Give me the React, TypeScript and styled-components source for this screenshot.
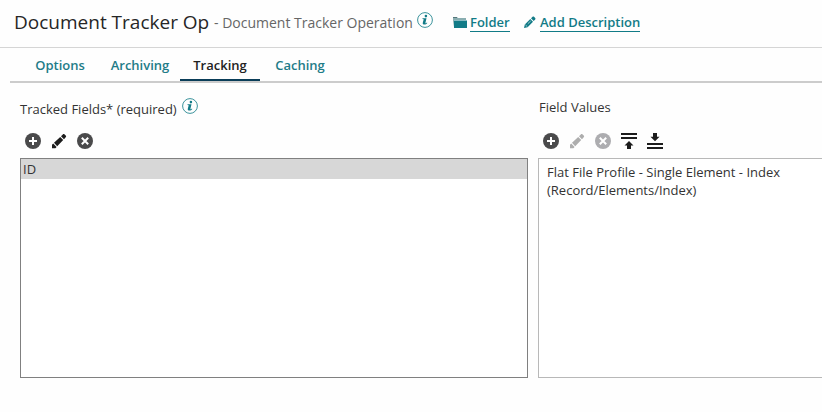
import React from "react";
import styled, { createGlobalStyle } from "styled-components";

const Global = createGlobalStyle`
  * { box-sizing: border-box; }
  body { margin: 0; background: #fff; overflow: hidden; }
`;

const Page = styled.div`
  height: 412px;
  overflow: hidden;
  background: #fefefe;
  color: #333;
  font: 13px/18px "Open Sans", "Noto Sans", sans-serif;
  white-space: nowrap;
`;

const Header = styled.header`
  display: flex;
  height: 48px;
  padding-left: 14px;
  border-bottom: 1px solid #d5d5d5;
`;

const Title = styled.h1`
  margin: 8px 0 0;
  width: 200px;
  font-size: 19px;
  line-height: 28px;
  font-weight: 400;
  color: #262626;
`;

const Subtitle = styled.span`
  margin-top: 13px;
  width: 203px;
  font-size: 14px;
  line-height: 20px;
  color: #666;
`;

const HeaderInfo = styled.span`
  display: flex;
  margin-top: 12px;
  width: 36px;
`;

const HeaderLink = styled.div<{ $width: number }>`
  display: flex;
  width: ${(p) => p.$width}px;
  svg { margin-top: 16px; flex: none; }
`;

const LinkText = styled.a<{ $gap: number }>`
  height: 19px;
  margin: 13px 0 0 ${(p) => p.$gap}px;
  border-bottom: 1px solid #127b87;
  font-size: 13px;
  line-height: 18px;
  font-weight: 600;
  color: #127b87;
`;

const Tabs = styled.nav`
  display: flex;
  height: 35px;
  margin-left: 10px;
  border-bottom: 2px solid #ccc;
`;

const Tab = styled.a<{ $active?: boolean; $width: number }>`
  width: ${(p) => p.$width}px;
  height: 33px;
  padding-top: 8px;
  text-align: center;
  font-weight: 600;
  color: ${(p) => (p.$active ? "#222" : "#1f7c88")};
  border-bottom: 2px solid ${(p) => (p.$active ? "#0a3d58" : "transparent")};

  &:nth-child(2) { margin-right: 10px; }
`;

const Columns = styled.main`
  display: grid;
  grid-template-columns: 508px 300px;
  gap: 10px;
  padding: 13px 0 0 20px;
`;

const Label = styled.div<{ $top: number; $indent?: number }>`
  display: flex;
  height: 37px;
  gap: 5px;
  padding: ${(p) => p.$top}px 0 0 ${(p) => p.$indent ?? 0}px;
  svg { margin-top: -2px; }
`;

const Toolbar = styled.div`
  display: flex;
  gap: 10px;
  height: 25px;
  padding-left: 5px;
`;

const List = styled.div<{ $border: string }>`
  height: 220px;
  border: 1px solid ${(p) => p.$border};
  background: #fff;
`;

const SelectedItem = styled.div`
  height: 20px;
  padding: 1px 2px;
  background: #d7d7d7;
`;

const ValueItem = styled.div`
  padding: 4px 8px;
`;

const InfoIcon = () => (
  <svg width="16" height="16" viewBox="0 0 16 16" fill="none">
    <circle cx="8" cy="8" r="7.4" stroke="#3b939c" />
    <circle cx="8.9" cy="4.1" r="1.3" fill="#127b87" />
    <path d="M5.5 6.3h4L8.3 11.3c.6 0 1.1-.4 1.6-.9l.4.5c-.8 1-1.7 1.6-2.9 1.6-1.4 0-1.9-.7-1.6-1.8l.9-3.4-1.2-.2z" fill="#127b87" />
  </svg>
);

const FolderIcon = () => (
  <svg width="14" height="12" viewBox="0 0 14 12">
    <path d="M0 1h4l1 1h8v2H1v7L0 5z" fill="#8aaeb1" />
    <path d="M1 4.5h13V12H1z" fill="#127b87" />
    <path d="M0 1h4v1H0z" fill="#55777b" />
  </svg>
);

const HeaderPencilIcon = () => (
  <svg width="12" height="12" viewBox="0 0 12 12" fill="#127b87">
    <path d="M0 12l.8-3.6L6.3 3 9 5.7l-5.4 5.5zM7 2.3L8.6.8c.4-.4 1-.4 1.4 0L11.2 2c.4.4.4 1 0 1.4L9.7 5z" />
    <path d="M1.4 8.8l1.9 1.9M3.8 7.8L6.7 5" stroke="#fff" strokeWidth=".6" />
  </svg>
);

const PencilIcon = ({ color }: { color: string }) => (
  <svg width="16" height="16" viewBox="0 0 16 16" fill={color}>
    <path d="M1 15.2v-3.4L2.2 10.5l3.4 3.4-1.2 1.3zM3 9.8L9.2 4l3 3-6 6.2zM10 3.2l1.8-1.8c.6-.6 1.2-.6 1.8 0l1.1 1.1c.6.6.6 1.2 0 1.8L13 6.2z" />
  </svg>
);

const CircleIcon = ({ color, kind }: { color: string; kind: "add" | "remove" }) => (
  <svg width="16" height="16" viewBox="0 0 16 16">
    <circle cx="8" cy="8" r="8" fill={color} />
    <path d={kind === "add" ? "M8 4v8M4 8h8" : "M4.8 4.8l6.4 6.4M11.2 4.8l-6.4 6.4"} stroke="#fff" strokeWidth="2" />
  </svg>
);

const TopIcon = () => (
  <svg width="16" height="16" viewBox="0 0 16 16" fill="#1c1c1c">
    <path d="M0 0h16v2H0zM0 4h16v2H0zM8 8l4.5 4.5H10V16H6v-3.500H3.500z" />
  </svg>
);

const BottomIcon = () => (
  <svg width="16" height="16" viewBox="0 0 16 16" fill="#1c1c1c">
    <path d="M0 10h16v2H0zM0 14h16v2H0zM8 8.200L3.500 3.700H6V0h4v3.700h2.500z" />
  </svg>
);

export default function App() {
  return (
    <Page>
      <Global />
      <Header>
        <Title>Document Tracker Op</Title>
        <Subtitle>- Document Tracker Operation</Subtitle>
        <HeaderInfo><InfoIcon /></HeaderInfo>
        <HeaderLink $width={71}><FolderIcon /><LinkText $gap={3}>Folder</LinkText></HeaderLink>
        <HeaderLink $width={130}><HeaderPencilIcon /><LinkText $gap={4}>Add Description</LinkText></HeaderLink>
      </Header>
      <Tabs>
        <Tab $width={100}>Options</Tab>
        <Tab $width={60}>Archiving</Tab>
        <Tab $width={80} $active>Tracking</Tab>
        <Tab $width={80}>Caching</Tab>
      </Tabs>
      <Columns>
        <section>
          <Label $top={4}><span>Tracked Fields* (required)</span><InfoIcon /></Label>
          <Toolbar>
            <CircleIcon color="#4a4a4b" kind="add" />
            <PencilIcon color="#1c1c1c" />
            <CircleIcon color="#4a4a4b" kind="remove" />
          </Toolbar>
          <List $border="#808080"><SelectedItem>ID</SelectedItem></List>
        </section>
        <section>
          <Label $top={2} $indent={1}><span>Field Values</span></Label>
          <Toolbar>
            <CircleIcon color="#4a4a4b" kind="add" />
            <PencilIcon color="#adadad" />
            <CircleIcon color="#adadb0" kind="remove" />
            <TopIcon />
            <BottomIcon />
          </Toolbar>
          <List $border="#b8b8b8">
            <ValueItem>Flat File Profile - Single Element - Index<br />(Record/Elements/Index)</ValueItem>
          </List>
        </section>
      </Columns>
    </Page>
  );
}
